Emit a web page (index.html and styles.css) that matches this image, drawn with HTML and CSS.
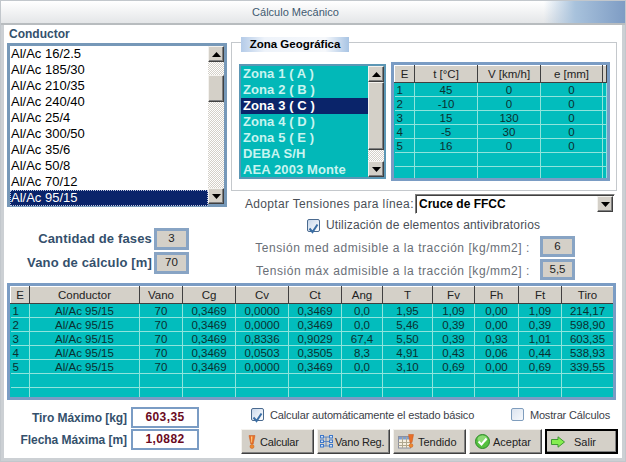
FILE: index.html
```html
<!DOCTYPE html>
<html lang="es">
<head>
<meta charset="utf-8">
<title>Cálculo Mecánico</title>
<link rel="stylesheet" href="styles.css">
</head>
<body>
<div class="window">
  <div class="titlebar">Cálculo Mecánico</div>
  <div class="content">
    <div class="upper">
      <div class="left-col">
        <div class="conductor-label">Conductor</div>
        <div class="listbox">
          <ul class="items">
            <li>Al/Ac 16/2.5</li><li>Al/Ac 185/30</li><li>Al/Ac 210/35</li><li>Al/Ac 240/40</li><li>Al/Ac 25/4</li><li>Al/Ac 300/50</li><li>Al/Ac 35/6</li><li>Al/Ac 50/8</li><li>Al/Ac 70/12</li><li class="sel">Al/Ac 95/15</li>
          </ul>
          <div class="vscroll list-scroll">
            <span class="sbtn"><svg width="9" height="5" viewBox="0 0 9 5"><path d="M4.500 0 9 5H0z"/></svg></span>
            <span class="thumb thumb-cond"></span>
            <span class="track-fill"></span>
            <span class="sbtn"><svg width="9" height="5" viewBox="0 0 9 5"><path d="M0 0h9L4.500 5z"/></svg></span>
          </div>
        </div>
        <div class="fases">
          <div class="fase-row"><span class="strong-label">Cantidad de fases</span><span class="box">3</span></div>
          <div class="fase-row"><span class="strong-label">Vano de cálculo [m]</span><span class="box">70</span></div>
        </div>
      </div>
      <div class="right-col">
        <fieldset class="group">
          <legend class="legend">Zona Geográfica</legend>
          <div class="group-row">
            <div class="zonas">
              <ul class="zona-items">
                <li>Zona 1 ( A )</li><li>Zona 2 ( B )</li><li class="sel">Zona 3 ( C )</li><li>Zona 4 ( D )</li><li>Zona 5 ( E )</li><li>DEBA S/H</li><li>AEA 2003 Monte</li>
              </ul>
              <div class="vscroll zona-scroll">
                <span class="sbtn"><svg width="9" height="5" viewBox="0 0 9 5"><path d="M4.500 0 9 5H0z"/></svg></span>
                <span class="thumb thumb-zona"></span>
                <span class="track-fill"></span>
                <span class="sbtn"><svg width="9" height="5" viewBox="0 0 9 5"><path d="M0 0h9L4.500 5z"/></svg></span>
              </div>
            </div>
            <div class="gridwrap small-grid">
              <table class="grid">
                <colgroup><col class="s1"><col class="s2"><col class="s2"><col class="s3"><col></colgroup>
                <thead><tr><th>E</th><th>t [°C]</th><th>V [km/h]</th><th>e [mm]</th><th></th></tr></thead>
                <tbody>
                  <tr><td class="first">1</td><td>45</td><td>0</td><td>0</td><td></td></tr>
                  <tr><td class="first">2</td><td>-10</td><td>0</td><td>0</td><td></td></tr>
                  <tr><td class="first">3</td><td>15</td><td>130</td><td>0</td><td></td></tr>
                  <tr><td class="first">4</td><td>-5</td><td>30</td><td>0</td><td></td></tr>
                  <tr><td class="first">5</td><td>16</td><td>0</td><td>0</td><td></td></tr>
                  <tr><td></td><td></td><td></td><td></td><td></td></tr>
                  <tr class="last"><td></td><td></td><td></td><td></td><td></td></tr>
                </tbody>
              </table>
            </div>
          </div>
        </fieldset>
        <div class="adoptar">
          <span class="soft-label">Adoptar Tensiones para línea:</span>
          <div class="select"><span class="select-text">Cruce de FFCC</span><span class="sbtn select-btn"><svg width="9" height="5" viewBox="0 0 9 5"><path d="M0 0h9L4.500 5z"/></svg></span></div>
        </div>
        <label class="check anti"><span class="cb on"><svg width="11" height="11" viewBox="0 0 11 11"><path d="M1.500 5.500 4.500 9 9.500 1.500" fill="none" stroke="#3a6ea5" stroke-width="2"/></svg></span><span class="soft-label anti-text">Utilización de elementos antivibratorios</span></label>
        <div class="tension t1"><span class="soft-label">Tensión med admisible a la tracción [kg/mm2] :</span><span class="box">6</span></div>
        <div class="tension"><span class="soft-label">Tensión máx admisible a la tracción [kg/mm2] :</span><span class="box">5,5</span></div>
      </div>
    </div>
    <div class="gridwrap big-grid">
      <table class="grid">
        <colgroup><col class="b1"><col class="b2"><col class="b3"><col class="b4"><col class="b4"><col class="b4"><col class="b5"><col class="b6"><col class="b7"><col class="b8"><col class="b9"><col class="b10"><col></colgroup>
        <thead><tr><th>E</th><th>Conductor</th><th>Vano</th><th>Cg</th><th>Cv</th><th>Ct</th><th>Ang</th><th>T</th><th>Fv</th><th>Fh</th><th>Ft</th><th>Tiro</th><th></th></tr></thead>
        <tbody>
          <tr><td class="first">1</td><td>Al/Ac 95/15</td><td>70</td><td>0,3469</td><td>0,0000</td><td>0,3469</td><td>0,0</td><td>1,95</td><td>1,09</td><td>0,00</td><td>1,09</td><td>214,17</td><td></td></tr>
          <tr><td class="first">2</td><td>Al/Ac 95/15</td><td>70</td><td>0,3469</td><td>0,0000</td><td>0,3469</td><td>0,0</td><td>5,46</td><td>0,39</td><td>0,00</td><td>0,39</td><td>598,90</td><td></td></tr>
          <tr><td class="first">3</td><td>Al/Ac 95/15</td><td>70</td><td>0,3469</td><td>0,8336</td><td>0,9029</td><td>67,4</td><td>5,50</td><td>0,39</td><td>0,93</td><td>1,01</td><td>603,35</td><td></td></tr>
          <tr><td class="first">4</td><td>Al/Ac 95/15</td><td>70</td><td>0,3469</td><td>0,0503</td><td>0,3505</td><td>8,3</td><td>4,91</td><td>0,43</td><td>0,06</td><td>0,44</td><td>538,93</td><td></td></tr>
          <tr><td class="first">5</td><td>Al/Ac 95/15</td><td>70</td><td>0,3469</td><td>0,0000</td><td>0,3469</td><td>0,0</td><td>3,10</td><td>0,69</td><td>0,00</td><td>0,69</td><td>339,55</td><td></td></tr>
          <tr><td></td><td></td><td></td><td></td><td></td><td></td><td></td><td></td><td></td><td></td><td></td><td></td><td></td></tr>
          <tr class="last"><td></td><td></td><td></td><td></td><td></td><td></td><td></td><td></td><td></td><td></td><td></td><td></td><td></td></tr>
        </tbody>
      </table>
    </div>
    <div class="lower">
      <div class="results">
        <div class="result-row"><span class="strong-label">Tiro Máximo [kg]</span><span class="result">603,35</span></div>
        <div class="result-row"><span class="strong-label">Flecha Máxima [m]</span><span class="result">1,0882</span></div>
      </div>
      <div class="actions">
        <div class="checks">
          <label class="check"><span class="cb on"><svg width="11" height="11" viewBox="0 0 11 11"><path d="M1.500 5.500 4.500 9 9.500 1.500" fill="none" stroke="#3a6ea5" stroke-width="2"/></svg></span><span class="soft-label dark">Calcular automáticamente el estado básico</span></label>
          <label class="check"><span class="cb"></span><span class="soft-label dark">Mostrar Cálculos</span></label>
        </div>
        <div class="buttons">
          <button class="btn b-calc"><svg width="8" height="14" viewBox="0 0 8 14"><path d="M1 .5h6L5.200 9H2.800z" fill="#e8702a" stroke="#c9581a" stroke-width=".5"/><path d="M3 1.500h1.400L4 7.500H3.300z" fill="#fbd080"/><circle cx="4" cy="11.500" r="2" fill="#ee8a2e" stroke="#c9581a" stroke-width=".5"/></svg>Calcular</button>
          <button class="btn b-vano"><svg width="13" height="13" viewBox="0 0 13 13"><path d="M2 2h9M2 6.500h9M2 11h9M6 2v4.500M6 6.500V11" stroke="#5f86c0" fill="none"/><g fill="#d4e2f6" stroke="#3f78c8"><rect x=".5" y=".5" width="3" height="2.500"/><rect x="9.500" y=".5" width="3" height="2.500"/><rect x=".5" y="5" width="3" height="2.500"/><rect x="9.500" y="5" width="3" height="2.500"/><rect x=".5" y="9.500" width="3" height="2.500"/><rect x="9.500" y="9.500" width="3" height="2.500"/></g></svg>Vano Reg.</button>
          <button class="btn b-tend"><svg width="16" height="15" viewBox="0 0 16 15"><rect x=".5" y="2.500" width="12" height="11.500" fill="#f6efe0" stroke="#8a8fa0"/><rect x="1" y="3" width="11" height="2.500" fill="#7f9fd0"/><path d="M.5 8.500h12M.5 11.500h12M4.500 3v11M8.500 3v11" stroke="#b0a890" fill="none"/><path d="M10.500.5h5L14 8.500h-2z" fill="#e8702a" stroke="#c9581a" stroke-width=".5"/><circle cx="13" cy="11.500" r="1.900" fill="#ee8a2e" stroke="#c9581a" stroke-width=".5"/></svg>Tendido</button>
          <button class="btn b-ok"><svg width="15" height="15" viewBox="0 0 15 15"><circle cx="7.500" cy="7.500" r="7" fill="#55c040" stroke="#2e8a2a"/><ellipse cx="7.500" cy="5" rx="5" ry="3.500" fill="#a4e48c" opacity=".7"/><path d="M3.500 7.500 6.500 10.500 11.500 4.500" fill="none" stroke="#fff" stroke-width="2"/></svg>Aceptar</button>
          <button class="btn b-exit"><svg width="14" height="12" viewBox="0 0 14 12"><path d="M.5 3.500h6.500V.8L13.500 6 7 11.200V8.500H.5z" fill="#86ee50" stroke="#3f9a30"/></svg>Salir</button>
        </div>
      </div>
    </div>
  </div>
</div>
</body>
</html>
```

FILE: styles.css
```css
* { box-sizing: border-box; }
html, body { margin: 0; padding: 0; }
body { width: 626px; height: 462px; overflow: hidden; background: #fff; font-family: "Liberation Sans", Arial, sans-serif; }
ul { list-style: none; margin: 0; padding: 0; }

.window { width: 626px; height: 462px; display: flex; flex-direction: column; background: #fff; border: 1px solid #c2c7cc; }
.titlebar { height: 24px; flex: none; text-align: center; font-size: 11px; line-height: 23px; color: #3f5a70; padding-right: 35px;
  background: linear-gradient(90deg, rgba(255,255,255,0) 0, rgba(255,255,255,0) 87%, #a8c2dc 92%, #7e9cc4 100%), linear-gradient(180deg, #fff 0, #e4e6e8 100%);
  border-bottom: 2px solid #b8bcbf; }
.content { flex: 1; display: flex; flex-direction: column; border: solid #ccd0d4; border-width: 0 3px 3px 3px; padding: 0 4px 0 3px; }

.upper { display: flex; gap: 4px; height: 258px; }
.left-col { width: 220px; flex: none; }
.conductor-label { height: 18px; font: bold 12px/19px "Liberation Sans", sans-serif; color: #34506c; padding-left: 2px; }
.listbox { height: 164px; display: flex; border: 3px solid #7698b8; background: #fff; }
.items { flex: 1; font-size: 13px; color: #000; }
.items li { height: 16px; line-height: 16px; padding-left: 1px; white-space: nowrap; }
.items .sel { background: #0a246a; color: #fff; outline: 1px dotted #c0c8e0; outline-offset: -1px; }

.vscroll { flex: none; width: 16px; display: flex; flex-direction: column; background: repeating-conic-gradient(#d4d0c8 0 25%, #fff 0 50%) 0 0 / 2px 2px; }
.sbtn, .thumb { display: flex; align-items: center; justify-content: center; flex: none; background: #d4d0c8; border: 1px solid; border-color: #f4f2ee #404040 #404040 #f4f2ee; box-shadow: inset -1px -1px 0 #808080; }
.sbtn { height: 16px; }
.thumb-cond { height: 27px; margin-top: 13px; }
.thumb-zona { height: 68px; }
.track-fill { flex: 1; }

.fases { margin-top: 21px; display: flex; flex-direction: column; gap: 2px; }
.fase-row { display: flex; justify-content: flex-end; align-items: center; gap: 2px; padding-right: 38px; }
.strong-label { font: bold 13px/16px "Liberation Sans", sans-serif; color: #34506c; letter-spacing: .15px; white-space: nowrap; }
.box { display: block; flex: none; width: 35px; height: 22px; background: #d4d0c8; border: 3px solid #88a4c4; text-align: center; font-size: 11.5px; line-height: 15px; color: #222; }

.right-col { flex: 1; min-width: 0; }
.group { margin: 17px 2px 0 0; padding: 0 6px 0 7px; height: 149px; border: 1px solid #c4c8cc; position: relative; }
.legend { position: absolute; left: 9px; top: -6px; width: 108px; height: 15px; background: linear-gradient(90deg, #b4cbe8, #eef3fa 22%, #f6f8fb 78%, #a8c4e4); color: #000; font: bold 11.5px/15px "Liberation Sans", sans-serif; text-align: center; padding: 0; }
.group-row { display: flex; gap: 5px; align-items: flex-start; margin-top: 19px; }
.zonas { width: 147px; height: 115px; margin-top: 2px; display: flex; border: 2px solid #5c97b5; background: #02b8b8; }
.zona-items { flex: 1; font: bold 13px/16px "Liberation Sans", sans-serif; color: #c8f4f0; letter-spacing: .1px; }
.zona-items li { height: 16px; padding-left: 2px; white-space: nowrap; overflow: hidden; }
.zona-items .sel { background: #0a246a; color: #fff; }

.gridwrap { border: 3px solid #7a9cc4; background: #02bdbd; overflow: hidden; }
.small-grid { width: 219px; height: 119px; }
.big-grid { width: 609px; height: 117px; flex: none; }
.grid { border-collapse: collapse; table-layout: fixed; width: 100%; font-size: 11.5px; color: #0b3030; }
.grid th { height: 17px; padding: 0; background: #d4d0c8; font-weight: normal; color: #222; border: 1px solid; border-color: #fff #404040 #404040 #fff; line-height: 14px; }
.grid td { height: 14px; padding: 0; text-align: center; line-height: 12px; border-right: 1px solid #8fe4dc; border-bottom: 1px solid #8fe4dc; overflow: hidden; }
.grid .first { text-align: left; padding-left: 2px; }
.grid .last td { border-bottom: 0; }
.s1 { width: 20px; } .s2 { width: 63px; } .s3 { width: 62px; }
.b1 { width: 19px; } .b2 { width: 110px; } .b3 { width: 43px; } .b4 { width: 53px; } .b5 { width: 41px; } .b6 { width: 50px; } .b7 { width: 42px; } .b8 { width: 44px; } .b9 { width: 43px; } .b10 { width: 52px; }

.adoptar { display: flex; align-items: center; margin-top: 3px; height: 20px; }
.soft-label { font-size: 12px; color: #4a4f57; letter-spacing: .33px; white-space: nowrap; }
.adoptar .soft-label { margin-left: 14px; width: 170px; }
.select { width: 200px; height: 20px; display: flex; align-items: center; border: 1px solid; border-color: #808080 #fff #fff #808080; box-shadow: inset 1px 1px 0 #404040; padding: 1px; }
.select-text { flex: 1; font: bold 12px/16px "Liberation Sans", sans-serif; padding-left: 2px; color: #000; }
.select-btn { width: 16px; height: 16px; }

.check { display: flex; align-items: center; gap: 6px; }
.cb { flex: none; width: 13px; height: 13px; border: 1px solid #7f9dbd; border-radius: 2px; background: linear-gradient(135deg, #dbe4f0, #f6f8fc); display: block; }
.cb.on { border-color: #4a6a8f; background: linear-gradient(135deg, #c8d8ec, #fff); }
.anti { margin: 4px 0 0 76px; height: 14px; }
.soft-label.anti-text { letter-spacing: .15px; }
.tension { display: flex; align-items: center; justify-content: flex-end; gap: 10px; padding-right: 43px; height: 23px; }
.tension .box { height: 21px; }
.t1 { margin-top: 3px; }
.tension .soft-label { color: #6a6f77; letter-spacing: .55px; margin-top: 3px; }

.lower { display: flex; height: 56px; }
.results { width: 192px; padding-top: 7px; display: flex; flex-direction: column; gap: 1px; }
.result-row { display: flex; justify-content: flex-end; align-items: center; gap: 4px; }
.results .strong-label { font-size: 12px; letter-spacing: -.05px; }
.result { display: block; width: 68px; height: 21px; border: 2px solid #7a9cc4; text-align: center; font: bold 12px/17px "Liberation Sans", sans-serif; color: #6a0a1e; letter-spacing: .4px; }
.actions { flex: 1; padding-left: 42px; }
.checks { display: flex; justify-content: space-between; align-items: flex-start; padding: 8px 8px 0 10px; height: 29px; }
.checks .dark { color: #3c4148; font-size: 11px; letter-spacing: -.15px; }
.buttons { display: flex; gap: 3px; }
.btn { flex: none; width: 73px; display: flex; align-items: center; height: 25px; background: #d4d0c8; border: 1px solid; border-color: #f4f2ee #404040 #404040 #f4f2ee; box-shadow: inset -1px -1px 0 #808080; font: 11px "Liberation Sans", sans-serif; color: #222; white-space: nowrap; }
.b-calc { padding: 0 0 0 6px; gap: 4px; letter-spacing: -.2px; }
.b-vano { padding: 0 0 0 2px; gap: 2px; letter-spacing: -.2px; }
.b-tend { padding: 0 0 0 4px; gap: 4px; }
.b-ok { padding: 0 0 0 5px; gap: 3px; }
.b-exit { padding: 0 0 0 4px; gap: 9px; border: 2px solid #000; }
```
